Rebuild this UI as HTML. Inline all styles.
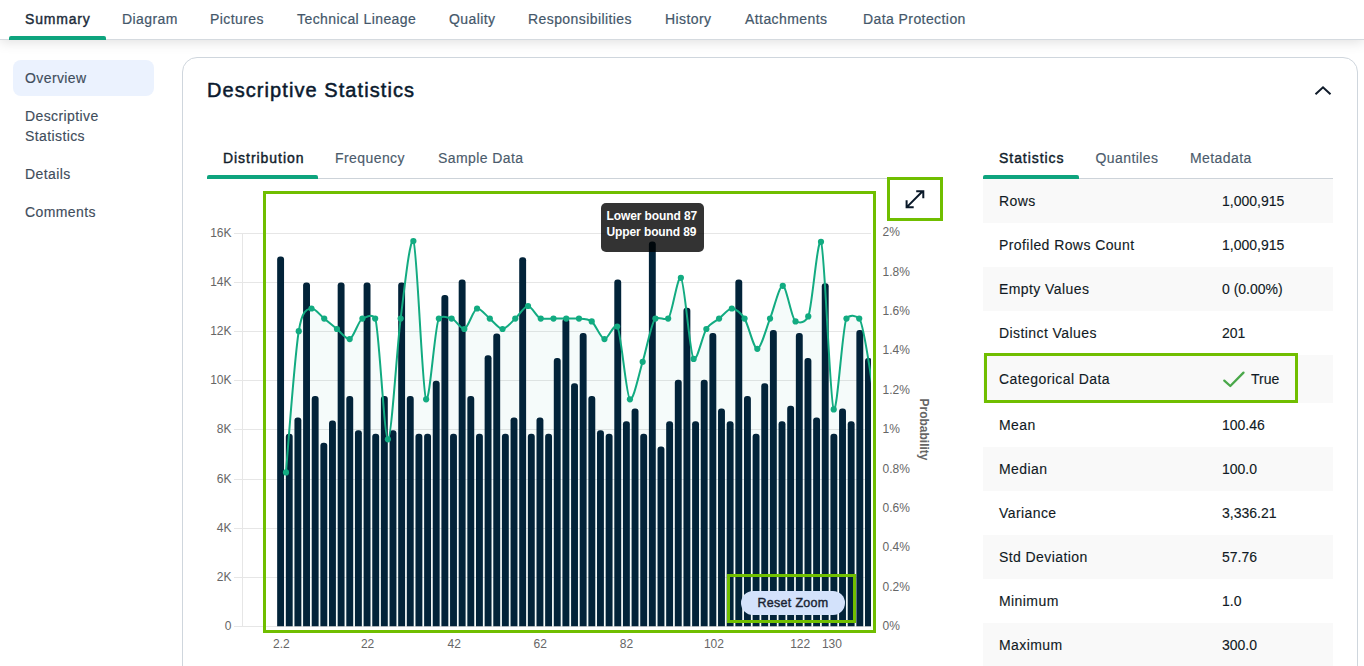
<!DOCTYPE html>
<html><head><meta charset="utf-8">
<style>
*{margin:0;padding:0;box-sizing:border-box}
html,body{width:1364px;height:666px;overflow:hidden;background:#fff;font-family:"Liberation Sans",sans-serif;position:relative}
.abs{position:absolute;white-space:nowrap}
#hdr{position:absolute;left:0;top:0;width:1364px;height:40px;background:#fff;border-bottom:1px solid #d5dadf;box-shadow:0 2px 12px rgba(0,0,0,0.13);z-index:2}
.tab{position:absolute;top:11px;font-size:14px;line-height:16px;color:#44576a;letter-spacing:0.42px;-webkit-text-stroke:0.2px #44576a}
.tab.act{color:#1c2b3a;font-weight:normal;letter-spacing:0.8px;-webkit-text-stroke:0.4px #1c2b3a}
.uline{position:absolute;background:#0ea47e;border-radius:2px 2px 0 0}
.side{position:absolute;left:25px;font-size:14px;line-height:20px;color:#3f4d5c;letter-spacing:0.4px;-webkit-text-stroke:0.15px #3f4d5c}
#pill{position:absolute;left:13px;top:60px;width:141px;height:36px;background:#ebf2fe;border-radius:8px}
#card{position:absolute;left:182px;top:57px;width:1176px;height:700px;border:1.2px solid #cfd6dd;border-radius:15px;background:#fff}
.ttl{position:absolute;left:207px;top:78px;font-size:20px;line-height:24px;color:#0b1a2e;letter-spacing:1.07px;-webkit-text-stroke:0.5px #0b1a2e}
.ct{position:absolute;font-size:14px;line-height:16px;color:#4b5b6c;letter-spacing:0.42px;-webkit-text-stroke:0.15px #4b5b6c}
.ct.act{color:#111d2b;font-weight:normal;letter-spacing:0.95px;-webkit-text-stroke:0.4px #111d2b}
.hl{position:absolute;background:#cdd3d9;height:1.5px}
.gbox{position:absolute;border:3px solid #70be00}
svg text.ax{font-family:"Liberation Sans",sans-serif;font-size:12px;fill:#666666}
svg text.axt{font-family:"Liberation Sans",sans-serif;font-size:12px;font-weight:bold;fill:#666666}
.row{position:absolute;left:983px;width:350px;height:44px}
.row.g{background:#f9f9f9}
.rl{position:absolute;left:16px;top:14px;font-size:14px;line-height:16px;color:#111a24;letter-spacing:0.42px;-webkit-text-stroke:0.12px #111a24}
.rv{position:absolute;left:239px;top:14px;font-size:14px;line-height:16px;color:#111a24;letter-spacing:0;-webkit-text-stroke:0.12px #111a24}
#tip{position:absolute;left:600.5px;top:203px;width:103.5px;height:48.5px;border-radius:5px;background:rgba(0,0,0,0.8);color:#fff;font-weight:bold;font-size:12px;line-height:15.6px;padding:6px 0 0 6px;letter-spacing:-0.1px}
#reset{position:absolute;left:741px;top:591px;width:104px;height:24px;border-radius:12px;background:#d3e2fb;color:#1a2433;font-weight:normal;font-size:12.5px;line-height:24px;text-align:center;letter-spacing:0.3px;-webkit-text-stroke:0.4px #1a2433}
</style></head><body>
<div id="hdr">
  <div class="tab act" style="left:25px">Summary</div>
  <div class="tab" style="left:122px">Diagram</div>
  <div class="tab" style="left:210px">Pictures</div>
  <div class="tab" style="left:297px">Technical Lineage</div>
  <div class="tab" style="left:449px">Quality</div>
  <div class="tab" style="left:528px">Responsibilities</div>
  <div class="tab" style="left:665px">History</div>
  <div class="tab" style="left:745px">Attachments</div>
  <div class="tab" style="left:863px">Data Protection</div>
  <div class="uline" style="left:9px;top:36px;width:97px;height:4px"></div>
</div>

<div id="pill"></div>
<div class="side" style="top:68px">Overview</div>
<div class="side" style="top:106px">Descriptive<br>Statistics</div>
<div class="side" style="top:164px">Details</div>
<div class="side" style="top:202px">Comments</div>

<div id="card"></div>
<div class="ttl">Descriptive Statistics</div>
<svg class="abs" style="left:1312px;top:82.7px" width="22" height="16" viewBox="0 0 22 16"><path d="M3.5 11.3 L11 4.3 L18.5 11.3" fill="none" stroke="#0f1b2a" stroke-width="2"/></svg>

<!-- chart tabs -->
<div class="ct act" style="left:223px;top:150px">Distribution</div>
<div class="ct" style="left:335px;top:150px">Frequency</div>
<div class="ct" style="left:438px;top:150px">Sample Data</div>
<div class="hl" style="left:207px;top:177.8px;width:736px"></div>
<div class="uline" style="left:207px;top:175px;width:111px;height:3.8px"></div>

<svg class="abs" style="left:0;top:0" width="1364" height="666">
<defs><clipPath id="pc"><rect x="242" y="180" width="629" height="447"/></clipPath></defs>
<line x1="234" y1="626.5" x2="871" y2="626.5" stroke="#e6e6e6" stroke-width="1"/>
<line x1="234" y1="577.5" x2="871" y2="577.5" stroke="#e6e6e6" stroke-width="1"/>
<line x1="234" y1="528.5" x2="871" y2="528.5" stroke="#e6e6e6" stroke-width="1"/>
<line x1="234" y1="479.5" x2="871" y2="479.5" stroke="#e6e6e6" stroke-width="1"/>
<line x1="234" y1="429.5" x2="871" y2="429.5" stroke="#e6e6e6" stroke-width="1"/>
<line x1="234" y1="380.5" x2="871" y2="380.5" stroke="#e6e6e6" stroke-width="1"/>
<line x1="234" y1="331.5" x2="871" y2="331.5" stroke="#e6e6e6" stroke-width="1"/>
<line x1="234" y1="282.5" x2="871" y2="282.5" stroke="#e6e6e6" stroke-width="1"/>
<line x1="234" y1="233.5" x2="871" y2="233.5" stroke="#e6e6e6" stroke-width="1"/>
<line x1="242.5" y1="233.5" x2="242.5" y2="627" stroke="#e6e6e6" stroke-width="1"/>
<text x="231.5" y="630.1" text-anchor="end" class="ax">0</text>
<text x="231.5" y="581.1" text-anchor="end" class="ax">2K</text>
<text x="231.5" y="532.1" text-anchor="end" class="ax">4K</text>
<text x="231.5" y="483.1" text-anchor="end" class="ax">6K</text>
<text x="231.5" y="433.1" text-anchor="end" class="ax">8K</text>
<text x="231.5" y="384.1" text-anchor="end" class="ax">10K</text>
<text x="231.5" y="335.1" text-anchor="end" class="ax">12K</text>
<text x="231.5" y="286.1" text-anchor="end" class="ax">14K</text>
<text x="231.5" y="237.1" text-anchor="end" class="ax">16K</text>
<text x="882.5" y="629.9" class="ax">0%</text>
<text x="882.5" y="590.5" class="ax">0.2%</text>
<text x="882.5" y="551.2" class="ax">0.4%</text>
<text x="882.5" y="511.8" class="ax">0.6%</text>
<text x="882.5" y="472.5" class="ax">0.8%</text>
<text x="882.5" y="433.1" class="ax">1%</text>
<text x="882.5" y="393.8" class="ax">1.2%</text>
<text x="882.5" y="354.4" class="ax">1.4%</text>
<text x="882.5" y="315.1" class="ax">1.6%</text>
<text x="882.5" y="275.7" class="ax">1.8%</text>
<text x="882.5" y="236.4" class="ax">2%</text>
<text x="281.3" y="647.5" text-anchor="middle" class="ax">2.2</text>
<text x="367.6" y="647.5" text-anchor="middle" class="ax">22</text>
<text x="454.3" y="647.5" text-anchor="middle" class="ax">42</text>
<text x="540.3" y="647.5" text-anchor="middle" class="ax">62</text>
<text x="626.5" y="647.5" text-anchor="middle" class="ax">82</text>
<text x="713.9" y="647.5" text-anchor="middle" class="ax">102</text>
<text x="800.2" y="647.5" text-anchor="middle" class="ax">122</text>
<text x="831.9" y="647.5" text-anchor="middle" class="ax">130</text>
<g clip-path="url(#pc)">
<path d="M286.00 472.40 C286.00 472.40 295.10 354.15 298.74 331.20 C302.38 308.25 307.84 309.13 311.48 308.50 C315.12 307.87 320.57 315.67 324.21 318.60 C327.85 321.53 333.31 326.07 336.95 329.00 C340.59 331.93 346.05 339.62 349.69 339.10 C353.33 338.58 358.79 319.63 362.43 318.60 C366.07 317.58 371.53 312.56 375.17 318.60 C378.81 324.63 384.26 439.30 387.90 439.30 C391.54 439.30 397.00 346.93 400.64 318.60 C404.28 290.27 409.74 236.97 413.38 241.00 C417.02 245.04 422.48 395.42 426.12 399.30 C429.76 403.18 435.22 322.64 438.86 318.60 C442.50 314.57 447.95 318.08 451.59 318.60 C455.23 319.12 460.69 329.50 464.33 329.00 C467.97 328.50 473.43 309.02 477.07 308.50 C480.71 307.98 486.17 315.67 489.81 318.60 C493.45 321.53 498.91 329.00 502.55 329.00 C506.19 329.00 511.64 321.89 515.28 318.60 C518.92 315.31 524.38 306.00 528.02 306.00 C531.66 306.00 537.12 317.97 540.76 318.60 C544.40 319.23 549.86 318.60 553.50 318.60 C557.14 318.60 562.60 318.60 566.24 318.60 C569.88 318.60 575.33 318.46 578.97 318.60 C582.61 318.74 588.07 318.56 591.71 321.40 C595.35 324.24 600.81 338.85 604.45 339.10 C608.09 339.36 613.55 323.49 617.19 326.50 C620.83 329.51 626.29 397.53 629.93 399.30 C633.57 401.06 639.02 373.33 642.66 361.80 C646.30 350.27 651.76 320.76 655.40 318.60 C659.04 316.44 664.50 320.64 668.14 318.60 C671.78 316.56 677.24 275.78 680.88 277.80 C684.52 279.81 689.98 356.34 693.62 358.90 C697.26 361.46 702.71 334.76 706.35 329.00 C709.99 323.24 715.45 321.53 719.09 318.60 C722.73 315.67 728.19 308.50 731.83 308.50 C735.47 308.50 740.93 312.84 744.57 318.60 C748.21 324.36 753.67 348.80 757.31 348.80 C760.95 348.80 766.40 327.60 770.04 318.60 C773.68 309.60 779.14 285.66 782.78 285.80 C786.42 285.94 791.88 319.87 795.52 321.40 C799.16 322.93 804.62 323.63 808.26 316.40 C811.90 309.17 817.36 237.15 821.00 241.80 C824.64 246.45 830.09 405.56 833.73 409.40 C837.37 413.24 842.83 323.14 846.47 318.60 C850.11 314.06 855.57 315.38 859.21 318.60 C862.85 321.82 871.95 383.00 871.95 383.00 L871.95 626.3 L286.00 626.3 Z" fill="rgba(16,172,128,0.045)"/>
<path d="M277.15 626.3 L277.15 259.50 Q277.15 256.50 280.15 256.50 L281.05 256.50 Q284.05 256.50 284.05 259.50 L284.05 626.3 Z" fill="#022339"/>
<path d="M285.80 626.3 L285.80 436.80 Q285.80 433.80 288.80 433.80 L289.69 433.80 Q292.69 433.80 292.69 436.80 L292.69 626.3 Z" fill="#022339"/>
<path d="M294.44 626.3 L294.44 420.60 Q294.44 417.60 297.44 417.60 L298.34 417.60 Q301.34 417.60 301.34 420.60 L301.34 626.3 Z" fill="#022339"/>
<path d="M303.09 626.3 L303.09 285.40 Q303.09 282.40 306.09 282.40 L306.99 282.40 Q309.99 282.40 309.99 285.40 L309.99 626.3 Z" fill="#022339"/>
<path d="M311.73 626.3 L311.73 399.00 Q311.73 396.00 314.73 396.00 L315.63 396.00 Q318.63 396.00 318.63 399.00 L318.63 626.3 Z" fill="#022339"/>
<path d="M320.38 626.3 L320.38 445.80 Q320.38 442.80 323.38 442.80 L324.28 442.80 Q327.28 442.80 327.28 445.80 L327.28 626.3 Z" fill="#022339"/>
<path d="M329.02 626.3 L329.02 423.50 Q329.02 420.50 332.02 420.50 L332.92 420.50 Q335.92 420.50 335.92 423.50 L335.92 626.3 Z" fill="#022339"/>
<path d="M337.67 626.3 L337.67 285.40 Q337.67 282.40 340.67 282.40 L341.56 282.40 Q344.56 282.40 344.56 285.40 L344.56 626.3 Z" fill="#022339"/>
<path d="M346.31 626.3 L346.31 399.00 Q346.31 396.00 349.31 396.00 L350.21 396.00 Q353.21 396.00 353.21 399.00 L353.21 626.3 Z" fill="#022339"/>
<path d="M354.96 626.3 L354.96 433.20 Q354.96 430.20 357.96 430.20 L358.86 430.20 Q361.86 430.20 361.86 433.20 L361.86 626.3 Z" fill="#022339"/>
<path d="M363.60 626.3 L363.60 285.40 Q363.60 282.40 366.60 282.40 L367.50 282.40 Q370.50 282.40 370.50 285.40 L370.50 626.3 Z" fill="#022339"/>
<path d="M372.25 626.3 L372.25 436.80 Q372.25 433.80 375.25 433.80 L376.15 433.80 Q379.15 433.80 379.15 436.80 L379.15 626.3 Z" fill="#022339"/>
<path d="M380.89 626.3 L380.89 399.00 Q380.89 396.00 383.89 396.00 L384.79 396.00 Q387.79 396.00 387.79 399.00 L387.79 626.3 Z" fill="#022339"/>
<path d="M389.54 626.3 L389.54 433.20 Q389.54 430.20 392.54 430.20 L393.44 430.20 Q396.44 430.20 396.44 433.20 L396.44 626.3 Z" fill="#022339"/>
<path d="M398.18 626.3 L398.18 285.40 Q398.18 282.40 401.18 282.40 L402.08 282.40 Q405.08 282.40 405.08 285.40 L405.08 626.3 Z" fill="#022339"/>
<path d="M406.82 626.3 L406.82 399.00 Q406.82 396.00 409.82 396.00 L410.72 396.00 Q413.72 396.00 413.72 399.00 L413.72 626.3 Z" fill="#022339"/>
<path d="M415.47 626.3 L415.47 436.80 Q415.47 433.80 418.47 433.80 L419.37 433.80 Q422.37 433.80 422.37 436.80 L422.37 626.3 Z" fill="#022339"/>
<path d="M424.12 626.3 L424.12 436.80 Q424.12 433.80 427.12 433.80 L428.02 433.80 Q431.02 433.80 431.02 436.80 L431.02 626.3 Z" fill="#022339"/>
<path d="M432.76 626.3 L432.76 383.80 Q432.76 380.80 435.76 380.80 L436.66 380.80 Q439.66 380.80 439.66 383.80 L439.66 626.3 Z" fill="#022339"/>
<path d="M441.41 626.3 L441.41 298.10 Q441.41 295.10 444.41 295.10 L445.31 295.10 Q448.31 295.10 448.31 298.10 L448.31 626.3 Z" fill="#022339"/>
<path d="M450.05 626.3 L450.05 436.80 Q450.05 433.80 453.05 433.80 L453.95 433.80 Q456.95 433.80 456.95 436.80 L456.95 626.3 Z" fill="#022339"/>
<path d="M458.69 626.3 L458.69 282.60 Q458.69 279.60 461.69 279.60 L462.59 279.60 Q465.59 279.60 465.59 282.60 L465.59 626.3 Z" fill="#022339"/>
<path d="M467.34 626.3 L467.34 399.00 Q467.34 396.00 470.34 396.00 L471.24 396.00 Q474.24 396.00 474.24 399.00 L474.24 626.3 Z" fill="#022339"/>
<path d="M475.99 626.3 L475.99 436.80 Q475.99 433.80 478.99 433.80 L479.88 433.80 Q482.88 433.80 482.88 436.80 L482.88 626.3 Z" fill="#022339"/>
<path d="M484.63 626.3 L484.63 358.20 Q484.63 355.20 487.63 355.20 L488.53 355.20 Q491.53 355.20 491.53 358.20 L491.53 626.3 Z" fill="#022339"/>
<path d="M493.28 626.3 L493.28 336.60 Q493.28 333.60 496.28 333.60 L497.18 333.60 Q500.18 333.60 500.18 336.60 L500.18 626.3 Z" fill="#022339"/>
<path d="M501.92 626.3 L501.92 436.80 Q501.92 433.80 504.92 433.80 L505.82 433.80 Q508.82 433.80 508.82 436.80 L508.82 626.3 Z" fill="#022339"/>
<path d="M510.56 626.3 L510.56 420.60 Q510.56 417.60 513.57 417.60 L514.47 417.60 Q517.47 417.60 517.47 420.60 L517.47 626.3 Z" fill="#022339"/>
<path d="M519.21 626.3 L519.21 260.20 Q519.21 257.20 522.21 257.20 L523.11 257.20 Q526.11 257.20 526.11 260.20 L526.11 626.3 Z" fill="#022339"/>
<path d="M527.86 626.3 L527.86 436.80 Q527.86 433.80 530.86 433.80 L531.75 433.80 Q534.75 433.80 534.75 436.80 L534.75 626.3 Z" fill="#022339"/>
<path d="M536.50 626.3 L536.50 420.60 Q536.50 417.60 539.50 417.60 L540.40 417.60 Q543.40 417.60 543.40 420.60 L543.40 626.3 Z" fill="#022339"/>
<path d="M545.14 626.3 L545.14 436.80 Q545.14 433.80 548.14 433.80 L549.04 433.80 Q552.04 433.80 552.04 436.80 L552.04 626.3 Z" fill="#022339"/>
<path d="M553.79 626.3 L553.79 361.10 Q553.79 358.10 556.79 358.10 L557.69 358.10 Q560.69 358.10 560.69 361.10 L560.69 626.3 Z" fill="#022339"/>
<path d="M562.43 626.3 L562.43 321.50 Q562.43 318.50 565.43 318.50 L566.33 318.50 Q569.33 318.50 569.33 321.50 L569.33 626.3 Z" fill="#022339"/>
<path d="M571.08 626.3 L571.08 386.30 Q571.08 383.30 574.08 383.30 L574.98 383.30 Q577.98 383.30 577.98 386.30 L577.98 626.3 Z" fill="#022339"/>
<path d="M579.72 626.3 L579.72 335.90 Q579.72 332.90 582.72 332.90 L583.62 332.90 Q586.62 332.90 586.62 335.90 L586.62 626.3 Z" fill="#022339"/>
<path d="M588.37 626.3 L588.37 399.00 Q588.37 396.00 591.37 396.00 L592.27 396.00 Q595.27 396.00 595.27 399.00 L595.27 626.3 Z" fill="#022339"/>
<path d="M597.01 626.3 L597.01 433.20 Q597.01 430.20 600.01 430.20 L600.91 430.20 Q603.91 430.20 603.91 433.20 L603.91 626.3 Z" fill="#022339"/>
<path d="M605.66 626.3 L605.66 436.80 Q605.66 433.80 608.66 433.80 L609.56 433.80 Q612.56 433.80 612.56 436.80 L612.56 626.3 Z" fill="#022339"/>
<path d="M614.30 626.3 L614.30 282.60 Q614.30 279.60 617.30 279.60 L618.20 279.60 Q621.20 279.60 621.20 282.60 L621.20 626.3 Z" fill="#022339"/>
<path d="M622.95 626.3 L622.95 424.20 Q622.95 421.20 625.95 421.20 L626.85 421.20 Q629.85 421.20 629.85 424.20 L629.85 626.3 Z" fill="#022339"/>
<path d="M631.60 626.3 L631.60 411.60 Q631.60 408.60 634.60 408.60 L635.50 408.60 Q638.50 408.60 638.50 411.60 L638.50 626.3 Z" fill="#022339"/>
<path d="M640.24 626.3 L640.24 436.80 Q640.24 433.80 643.24 433.80 L644.14 433.80 Q647.14 433.80 647.14 436.80 L647.14 626.3 Z" fill="#022339"/>
<path d="M648.88 626.3 L648.88 244.60 Q648.88 241.60 651.88 241.60 L652.78 241.60 Q655.78 241.60 655.78 244.60 L655.78 626.3 Z" fill="#022339"/>
<path d="M657.53 626.3 L657.53 449.40 Q657.53 446.40 660.53 446.40 L661.43 446.40 Q664.43 446.40 664.43 449.40 L664.43 626.3 Z" fill="#022339"/>
<path d="M666.17 626.3 L666.17 424.20 Q666.17 421.20 669.17 421.20 L670.07 421.20 Q673.07 421.20 673.07 424.20 L673.07 626.3 Z" fill="#022339"/>
<path d="M674.82 626.3 L674.82 382.70 Q674.82 379.70 677.82 379.70 L678.72 379.70 Q681.72 379.70 681.72 382.70 L681.72 626.3 Z" fill="#022339"/>
<path d="M683.46 626.3 L683.46 310.70 Q683.46 307.70 686.46 307.70 L687.36 307.70 Q690.36 307.70 690.36 310.70 L690.36 626.3 Z" fill="#022339"/>
<path d="M692.11 626.3 L692.11 424.20 Q692.11 421.20 695.11 421.20 L696.01 421.20 Q699.01 421.20 699.01 424.20 L699.01 626.3 Z" fill="#022339"/>
<path d="M700.75 626.3 L700.75 382.70 Q700.75 379.70 703.75 379.70 L704.65 379.70 Q707.65 379.70 707.65 382.70 L707.65 626.3 Z" fill="#022339"/>
<path d="M709.40 626.3 L709.40 335.90 Q709.40 332.90 712.40 332.90 L713.30 332.90 Q716.30 332.90 716.30 335.90 L716.30 626.3 Z" fill="#022339"/>
<path d="M718.04 626.3 L718.04 411.60 Q718.04 408.60 721.04 408.60 L721.94 408.60 Q724.94 408.60 724.94 411.60 L724.94 626.3 Z" fill="#022339"/>
<path d="M726.69 626.3 L726.69 424.20 Q726.69 421.20 729.69 421.20 L730.59 421.20 Q733.59 421.20 733.59 424.20 L733.59 626.3 Z" fill="#022339"/>
<path d="M735.34 626.3 L735.34 282.60 Q735.34 279.60 738.34 279.60 L739.24 279.60 Q742.24 279.60 742.24 282.60 L742.24 626.3 Z" fill="#022339"/>
<path d="M743.98 626.3 L743.98 399.00 Q743.98 396.00 746.98 396.00 L747.88 396.00 Q750.88 396.00 750.88 399.00 L750.88 626.3 Z" fill="#022339"/>
<path d="M752.62 626.3 L752.62 436.80 Q752.62 433.80 755.62 433.80 L756.52 433.80 Q759.52 433.80 759.52 436.80 L759.52 626.3 Z" fill="#022339"/>
<path d="M761.27 626.3 L761.27 386.30 Q761.27 383.30 764.27 383.30 L765.17 383.30 Q768.17 383.30 768.17 386.30 L768.17 626.3 Z" fill="#022339"/>
<path d="M769.91 626.3 L769.91 333.00 Q769.91 330.00 772.91 330.00 L773.81 330.00 Q776.81 330.00 776.81 333.00 L776.81 626.3 Z" fill="#022339"/>
<path d="M778.56 626.3 L778.56 424.20 Q778.56 421.20 781.56 421.20 L782.46 421.20 Q785.46 421.20 785.46 424.20 L785.46 626.3 Z" fill="#022339"/>
<path d="M787.20 626.3 L787.20 408.70 Q787.20 405.70 790.20 405.70 L791.10 405.70 Q794.10 405.70 794.10 408.70 L794.10 626.3 Z" fill="#022339"/>
<path d="M795.85 626.3 L795.85 335.90 Q795.85 332.90 798.85 332.90 L799.75 332.90 Q802.75 332.90 802.75 335.90 L802.75 626.3 Z" fill="#022339"/>
<path d="M804.50 626.3 L804.50 361.10 Q804.50 358.10 807.50 358.10 L808.39 358.10 Q811.39 358.10 811.39 361.10 L811.39 626.3 Z" fill="#022339"/>
<path d="M813.14 626.3 L813.14 420.60 Q813.14 417.60 816.14 417.60 L817.04 417.60 Q820.04 417.60 820.04 420.60 L820.04 626.3 Z" fill="#022339"/>
<path d="M821.78 626.3 L821.78 286.20 Q821.78 283.20 824.78 283.20 L825.68 283.20 Q828.68 283.20 828.68 286.20 L828.68 626.3 Z" fill="#022339"/>
<path d="M830.43 626.3 L830.43 436.80 Q830.43 433.80 833.43 433.80 L834.33 433.80 Q837.33 433.80 837.33 436.80 L837.33 626.3 Z" fill="#022339"/>
<path d="M839.07 626.3 L839.07 411.60 Q839.07 408.60 842.07 408.60 L842.97 408.60 Q845.97 408.60 845.97 411.60 L845.97 626.3 Z" fill="#022339"/>
<path d="M847.72 626.3 L847.72 424.20 Q847.72 421.20 850.72 421.20 L851.62 421.20 Q854.62 421.20 854.62 424.20 L854.62 626.3 Z" fill="#022339"/>
<path d="M856.36 626.3 L856.36 333.00 Q856.36 330.00 859.36 330.00 L860.26 330.00 Q863.26 330.00 863.26 333.00 L863.26 626.3 Z" fill="#022339"/>
<path d="M865.01 626.3 L865.01 361.10 Q865.01 358.10 868.01 358.10 L868.91 358.10 Q871.91 358.10 871.91 361.10 L871.91 626.3 Z" fill="#022339"/>
<path d="M286.00 472.40 C286.00 472.40 295.10 354.15 298.74 331.20 C302.38 308.25 307.84 309.13 311.48 308.50 C315.12 307.87 320.57 315.67 324.21 318.60 C327.85 321.53 333.31 326.07 336.95 329.00 C340.59 331.93 346.05 339.62 349.69 339.10 C353.33 338.58 358.79 319.63 362.43 318.60 C366.07 317.58 371.53 312.56 375.17 318.60 C378.81 324.63 384.26 439.30 387.90 439.30 C391.54 439.30 397.00 346.93 400.64 318.60 C404.28 290.27 409.74 236.97 413.38 241.00 C417.02 245.04 422.48 395.42 426.12 399.30 C429.76 403.18 435.22 322.64 438.86 318.60 C442.50 314.57 447.95 318.08 451.59 318.60 C455.23 319.12 460.69 329.50 464.33 329.00 C467.97 328.50 473.43 309.02 477.07 308.50 C480.71 307.98 486.17 315.67 489.81 318.60 C493.45 321.53 498.91 329.00 502.55 329.00 C506.19 329.00 511.64 321.89 515.28 318.60 C518.92 315.31 524.38 306.00 528.02 306.00 C531.66 306.00 537.12 317.97 540.76 318.60 C544.40 319.23 549.86 318.60 553.50 318.60 C557.14 318.60 562.60 318.60 566.24 318.60 C569.88 318.60 575.33 318.46 578.97 318.60 C582.61 318.74 588.07 318.56 591.71 321.40 C595.35 324.24 600.81 338.85 604.45 339.10 C608.09 339.36 613.55 323.49 617.19 326.50 C620.83 329.51 626.29 397.53 629.93 399.30 C633.57 401.06 639.02 373.33 642.66 361.80 C646.30 350.27 651.76 320.76 655.40 318.60 C659.04 316.44 664.50 320.64 668.14 318.60 C671.78 316.56 677.24 275.78 680.88 277.80 C684.52 279.81 689.98 356.34 693.62 358.90 C697.26 361.46 702.71 334.76 706.35 329.00 C709.99 323.24 715.45 321.53 719.09 318.60 C722.73 315.67 728.19 308.50 731.83 308.50 C735.47 308.50 740.93 312.84 744.57 318.60 C748.21 324.36 753.67 348.80 757.31 348.80 C760.95 348.80 766.40 327.60 770.04 318.60 C773.68 309.60 779.14 285.66 782.78 285.80 C786.42 285.94 791.88 319.87 795.52 321.40 C799.16 322.93 804.62 323.63 808.26 316.40 C811.90 309.17 817.36 237.15 821.00 241.80 C824.64 246.45 830.09 405.56 833.73 409.40 C837.37 413.24 842.83 323.14 846.47 318.60 C850.11 314.06 855.57 315.38 859.21 318.60 C862.85 321.82 871.95 383.00 871.95 383.00" fill="none" stroke="#12ab81" stroke-width="2"/>
<circle cx="286.00" cy="472.40" r="3.1" fill="#12ab81"/>
<circle cx="298.74" cy="331.20" r="3.1" fill="#12ab81"/>
<circle cx="311.48" cy="308.50" r="3.1" fill="#12ab81"/>
<circle cx="324.21" cy="318.60" r="3.1" fill="#12ab81"/>
<circle cx="336.95" cy="329.00" r="3.1" fill="#12ab81"/>
<circle cx="349.69" cy="339.10" r="3.1" fill="#12ab81"/>
<circle cx="362.43" cy="318.60" r="3.1" fill="#12ab81"/>
<circle cx="375.17" cy="318.60" r="3.1" fill="#12ab81"/>
<circle cx="387.90" cy="439.30" r="3.1" fill="#12ab81"/>
<circle cx="400.64" cy="318.60" r="3.1" fill="#12ab81"/>
<circle cx="413.38" cy="241.00" r="3.1" fill="#12ab81"/>
<circle cx="426.12" cy="399.30" r="3.1" fill="#12ab81"/>
<circle cx="438.86" cy="318.60" r="3.1" fill="#12ab81"/>
<circle cx="451.59" cy="318.60" r="3.1" fill="#12ab81"/>
<circle cx="464.33" cy="329.00" r="3.1" fill="#12ab81"/>
<circle cx="477.07" cy="308.50" r="3.1" fill="#12ab81"/>
<circle cx="489.81" cy="318.60" r="3.1" fill="#12ab81"/>
<circle cx="502.55" cy="329.00" r="3.1" fill="#12ab81"/>
<circle cx="515.28" cy="318.60" r="3.1" fill="#12ab81"/>
<circle cx="528.02" cy="306.00" r="3.1" fill="#12ab81"/>
<circle cx="540.76" cy="318.60" r="3.1" fill="#12ab81"/>
<circle cx="553.50" cy="318.60" r="3.1" fill="#12ab81"/>
<circle cx="566.24" cy="318.60" r="3.1" fill="#12ab81"/>
<circle cx="578.97" cy="318.60" r="3.1" fill="#12ab81"/>
<circle cx="591.71" cy="321.40" r="3.1" fill="#12ab81"/>
<circle cx="604.45" cy="339.10" r="3.1" fill="#12ab81"/>
<circle cx="617.19" cy="326.50" r="3.1" fill="#12ab81"/>
<circle cx="629.93" cy="399.30" r="3.1" fill="#12ab81"/>
<circle cx="642.66" cy="361.80" r="3.1" fill="#12ab81"/>
<circle cx="655.40" cy="318.60" r="3.1" fill="#12ab81"/>
<circle cx="668.14" cy="318.60" r="3.1" fill="#12ab81"/>
<circle cx="680.88" cy="277.80" r="3.1" fill="#12ab81"/>
<circle cx="693.62" cy="358.90" r="3.1" fill="#12ab81"/>
<circle cx="706.35" cy="329.00" r="3.1" fill="#12ab81"/>
<circle cx="719.09" cy="318.60" r="3.1" fill="#12ab81"/>
<circle cx="731.83" cy="308.50" r="3.1" fill="#12ab81"/>
<circle cx="744.57" cy="318.60" r="3.1" fill="#12ab81"/>
<circle cx="757.31" cy="348.80" r="3.1" fill="#12ab81"/>
<circle cx="770.04" cy="318.60" r="3.1" fill="#12ab81"/>
<circle cx="782.78" cy="285.80" r="3.1" fill="#12ab81"/>
<circle cx="795.52" cy="321.40" r="3.1" fill="#12ab81"/>
<circle cx="808.26" cy="316.40" r="3.1" fill="#12ab81"/>
<circle cx="821.00" cy="241.80" r="3.1" fill="#12ab81"/>
<circle cx="833.73" cy="409.40" r="3.1" fill="#12ab81"/>
<circle cx="846.47" cy="318.60" r="3.1" fill="#12ab81"/>
<circle cx="859.21" cy="318.60" r="3.1" fill="#12ab81"/>
</g>
<text x="0" y="0" transform="translate(919.5,429.5) rotate(90)" text-anchor="middle" class="axt">Probability</text>
</svg>

<div id="tip">Lower bound 87<br>Upper bound 89</div>
<div id="reset">Reset Zoom</div>
<div class="gbox" style="left:263px;top:191px;width:613px;height:441.8px"></div>
<div class="gbox" style="left:726.5px;top:574.3px;width:129.3px;height:48.3px"></div>
<div class="gbox" style="left:887px;top:177px;width:56px;height:44px;background:#fff"></div>
<svg class="abs" style="left:900px;top:184px" width="30" height="30" viewBox="0 0 30 30"><path d="M7.3 22.6 L22.6 7.3 M16.2 7.3 L23.3 7.3 L23.3 14.3 M6.6 16.2 L6.6 23.3 L13.7 23.3" fill="none" stroke="#0a1929" stroke-width="2"/></svg>

<!-- stats tabs -->
<div class="ct act" style="left:999px;top:150px">Statistics</div>
<div class="ct" style="left:1095.5px;top:150px">Quantiles</div>
<div class="ct" style="left:1190px;top:150px">Metadata</div>
<div class="hl" style="left:983px;top:177.8px;width:350px"></div>
<div class="uline" style="left:983px;top:175px;width:96px;height:3.8px"></div>

<div class="row g" style="top:179px"><div class="rl">Rows</div><div class="rv">1,000,915</div></div>
<div class="row" style="top:223px"><div class="rl">Profiled Rows Count</div><div class="rv">1,000,915</div></div>
<div class="row g" style="top:267px"><div class="rl">Empty Values</div><div class="rv">0 (0.00%)</div></div>
<div class="row" style="top:311px"><div class="rl">Distinct Values</div><div class="rv">201</div></div>
<div class="row g" style="top:355px;height:48px"><div class="rl" style="top:16px">Categorical Data</div><div class="rv" style="left:268px;top:16px">True</div>
  <svg class="abs" style="left:238px;top:13px" width="26" height="22" viewBox="0 0 26 22"><path d="M3.3 12.6 L9.3 18 L22.5 4.6" fill="none" stroke="#4aa84a" stroke-width="2.3" stroke-linecap="round" stroke-linejoin="round"/></svg></div>
<div class="row" style="top:403px"><div class="rl">Mean</div><div class="rv">100.46</div></div>
<div class="row g" style="top:447px"><div class="rl">Median</div><div class="rv">100.0</div></div>
<div class="row" style="top:491px"><div class="rl">Variance</div><div class="rv">3,336.21</div></div>
<div class="row g" style="top:535px"><div class="rl">Std Deviation</div><div class="rv">57.76</div></div>
<div class="row" style="top:579px"><div class="rl">Minimum</div><div class="rv">1.0</div></div>
<div class="row g" style="top:623px"><div class="rl">Maximum</div><div class="rv">300.0</div></div>
<div class="gbox" style="left:984px;top:353px;width:314px;height:50px"></div>
</body></html>
